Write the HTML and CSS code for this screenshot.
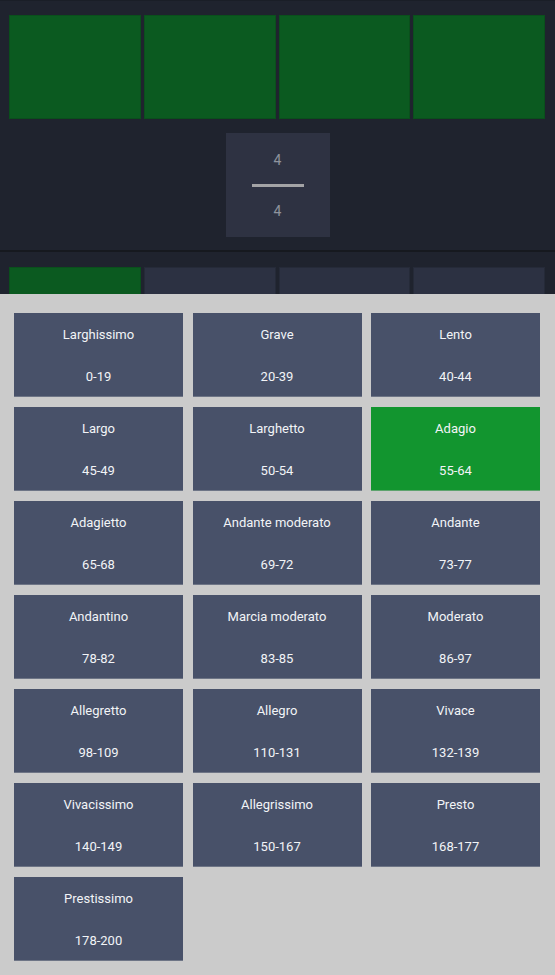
FILE: index.html
```html
<!DOCTYPE html>
<html lang="en">
<head>
  <meta charset="UTF-8" />
  <meta name="viewport" content="width=device-width, initial-scale=1.0"/>
  <title>Metronome</title>
  <link rel="stylesheet" href="styles.css">
</head>
<body>

  <div id="player">
    <div class="beats">
      <div class="beat on"></div>
      <div class="beat on"></div>
      <div class="beat on"></div>
      <div class="beat on"></div>
    </div>

    <div class="signature">
      <span class="num">4</span>
      <span class="bar"></span>
      <span class="num">4</span>
    </div>

    <div class="divider"></div>

    <div class="beats">
      <div class="beat on"></div>
      <div class="beat"></div>
      <div class="beat"></div>
      <div class="beat"></div>
    </div>
  </div>

  <div id="tempo-sheet">
    <div class="tempo"><span>Larghissimo</span><span>0-19</span></div>
    <div class="tempo"><span>Grave</span><span>20-39</span></div>
    <div class="tempo"><span>Lento</span><span>40-44</span></div>
    <div class="tempo"><span>Largo</span><span>45-49</span></div>
    <div class="tempo"><span>Larghetto</span><span>50-54</span></div>
    <div class="tempo active"><span>Adagio</span><span>55-64</span></div>
    <div class="tempo"><span>Adagietto</span><span>65-68</span></div>
    <div class="tempo"><span>Andante moderato</span><span>69-72</span></div>
    <div class="tempo"><span>Andante</span><span>73-77</span></div>
    <div class="tempo"><span>Andantino</span><span>78-82</span></div>
    <div class="tempo"><span>Marcia moderato</span><span>83-85</span></div>
    <div class="tempo"><span>Moderato</span><span>86-97</span></div>
    <div class="tempo"><span>Allegretto</span><span>98-109</span></div>
    <div class="tempo"><span>Allegro</span><span>110-131</span></div>
    <div class="tempo"><span>Vivace</span><span>132-139</span></div>
    <div class="tempo"><span>Vivacissimo</span><span>140-149</span></div>
    <div class="tempo"><span>Allegrissimo</span><span>150-167</span></div>
    <div class="tempo"><span>Presto</span><span>168-177</span></div>
    <div class="tempo"><span>Prestissimo</span><span>178-200</span></div>
  </div>

</body>
</html>
```

FILE: styles.css
```css
body {
  margin: 0;
  background-color: #1f232e;
  font-family: Roboto, "Liberation Sans", sans-serif;
}
#player {
  height: 294px;
  overflow: hidden;
  border-top: 1px solid #1a1e27;
  box-sizing: border-box;
}
.beats {
  display: flex;
  gap: 3px;
  padding: 14px 10px 0 9px;
}
.beat {
  flex: 1;
  height: 104px;
  background-color: #2c3142;
  border: 1px solid #252a38;
  box-sizing: border-box;
}
.beat.on {
  background-color: #0b5a20;
  border-color: #0a4f1c;
}
.signature {
  width: 104px;
  height: 104px;
  margin: 14px auto 0;
  background-color: #2e3242;
  display: flex;
  flex-direction: column;
  align-items: center;
  justify-content: center;
  color: #8f939d;
  font-size: 14px;
}
.num {
  line-height: 18px;
}
.bar {
  width: 52px;
  height: 3px;
  background-color: #a3a3a5;
  margin: 15px 0;
}
.divider {
  height: 2px;
  background-color: #16191f;
  margin-top: 13px;
}
.divider + .beats {
  padding-top: 15px;
}
#tempo-sheet {
  background-color: #cbcbcb;
  height: 681px;
  box-sizing: border-box;
  padding: 19px 15px 0 14px;
  display: grid;
  grid-template-columns: repeat(3, 1fr);
  grid-auto-rows: 84px;
  column-gap: 9.5px;
  row-gap: 10px;
  align-content: start;
}
.tempo {
  background-color: #485169;
  border-bottom: 1px solid #6e7586;
  color: #f2f4f7;
  font-size: 13px;
  line-height: 18px;
  display: flex;
  flex-direction: column;
  justify-content: space-between;
  align-items: center;
  padding: 13px 0 10px;
  box-sizing: border-box;
}
.tempo.active {
  background-color: #12952f;
  border-bottom-color: #5ea36e;
}
```
